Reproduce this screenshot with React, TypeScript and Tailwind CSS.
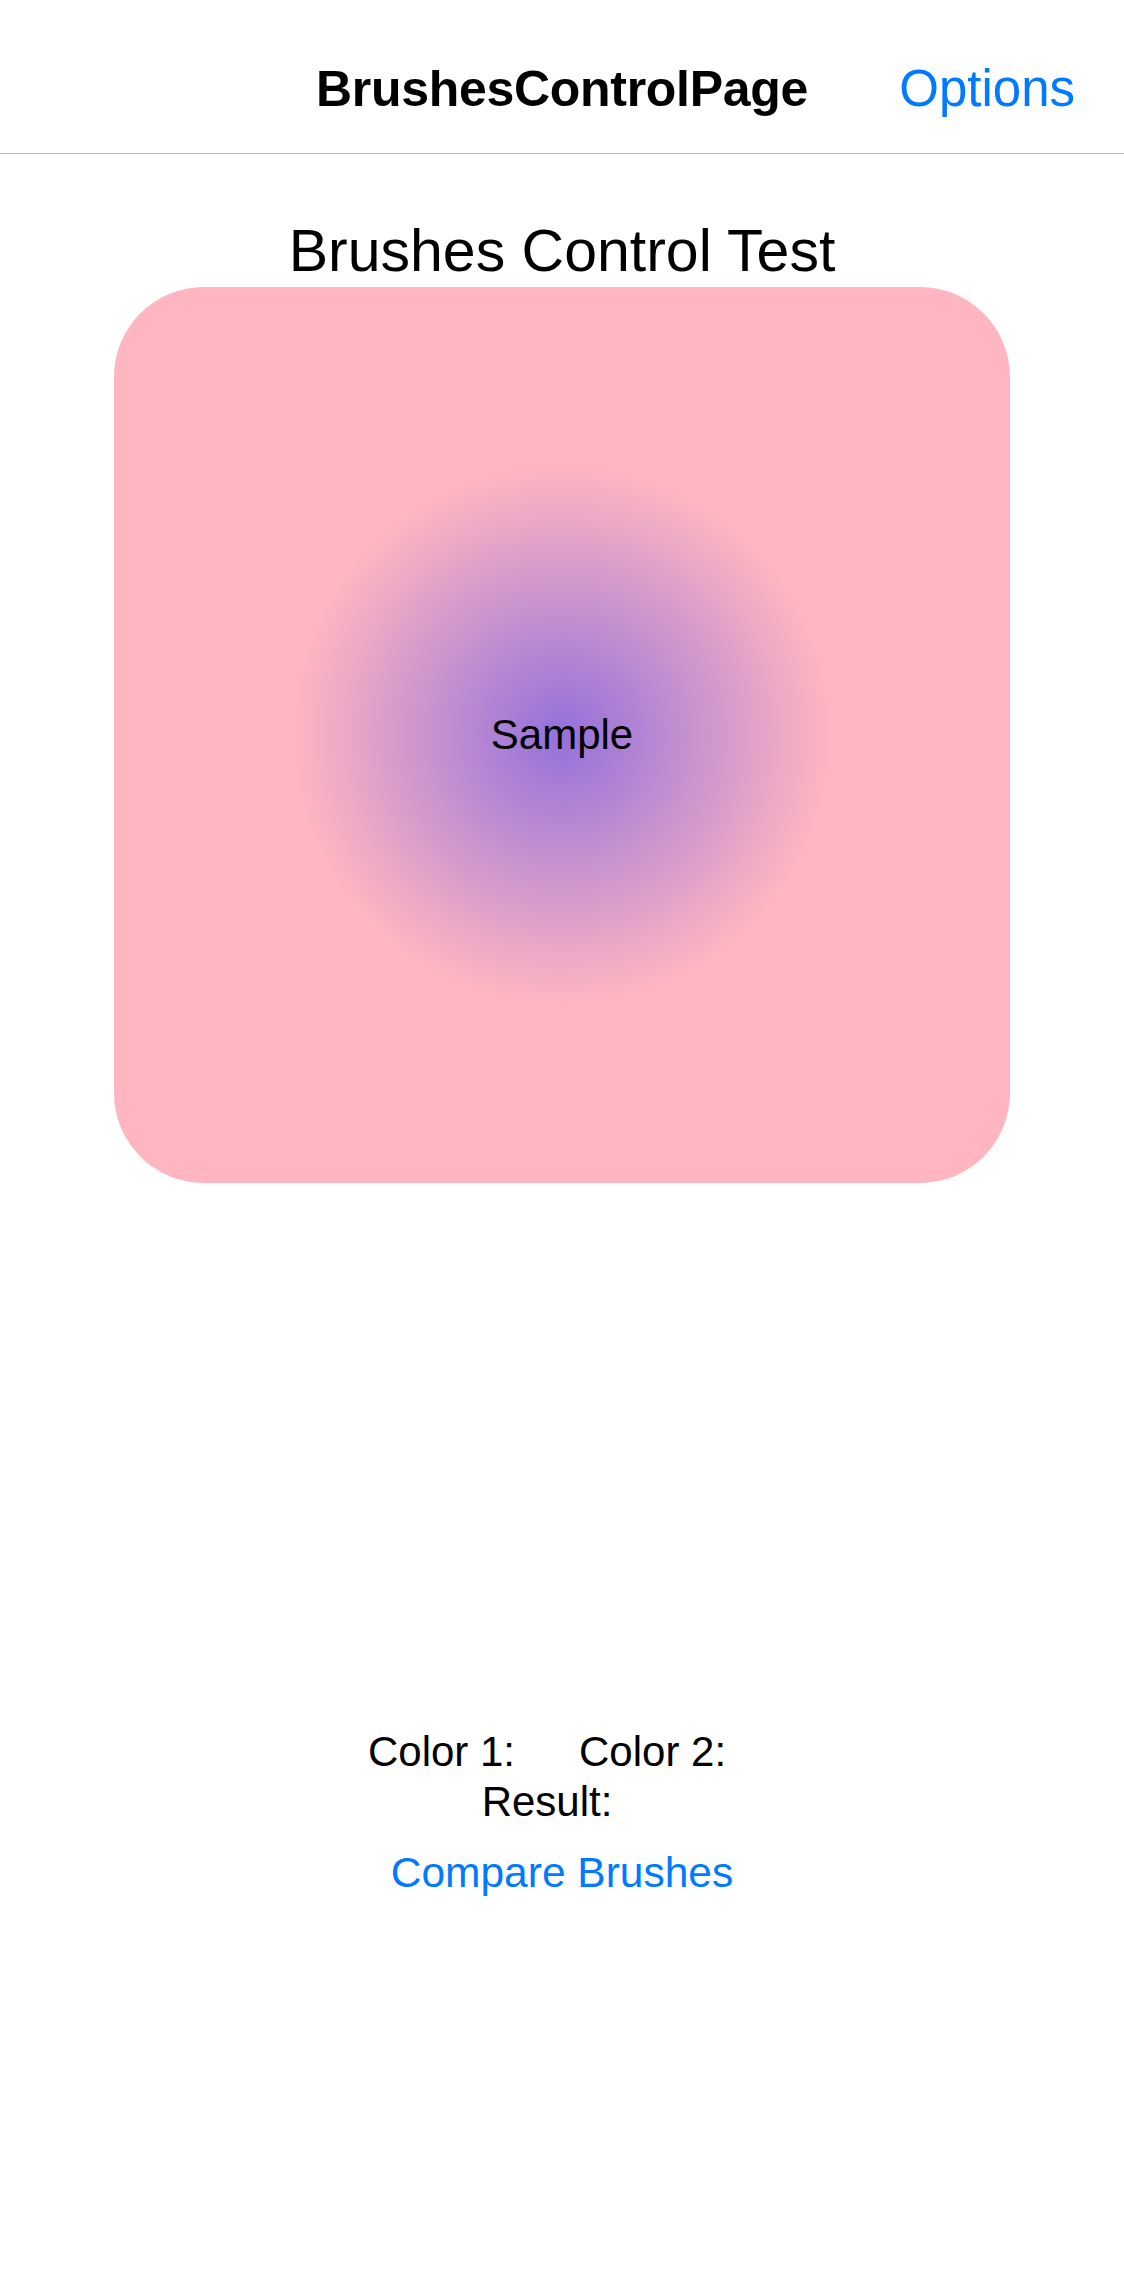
import React from 'react';

const font = "font-['Liberation_Sans',Arial,sans-serif]";

export default function App() {
  return (
    <div className={`min-h-[2286px] w-[1124px] bg-white text-black ${font}`}>
      {/* Navigation bar */}
      <header className="grid h-[154px] grid-cols-[1fr_auto_1fr] items-start border-b border-[#b8b8b8] pt-[60px]">
        <div />
        <h1 className="text-[50px] leading-[58px] font-bold tracking-[-0.3px]">BrushesControlPage</h1>
        <button className="justify-self-end pr-[49px] text-[51px] leading-[58px] text-[#007aff]">Options</button>
      </header>

      <main className="flex flex-col items-center">
        <h2 className="mt-[64px] text-[59px] leading-[66px]">Brushes Control Test</h2>

        {/* Brush sample */}
        <div className="mt-[3px] flex h-[896px] w-[896px] items-center justify-center rounded-[90px] bg-[#ffb6c1] bg-[radial-gradient(circle_269px_at_center,#9370db_0%,#ffb6c1_100%)]">
          <span className="text-[42px] leading-[50px]">Sample</span>
        </div>

        {/* Comparison */}
        <div className="mt-[544px] flex flex-col items-center text-[42px] leading-[50px]">
          <div className="flex gap-[64px] pr-[30px]">
            <span>Color 1:</span>
            <span>Color 2:</span>
          </div>
          <div className="pr-[30px]">Result:</div>
        </div>
        <button className="mt-[21px] text-[42.5px] leading-[50px] text-[#007aff]">Compare Brushes</button>
      </main>
    </div>
  );
}
